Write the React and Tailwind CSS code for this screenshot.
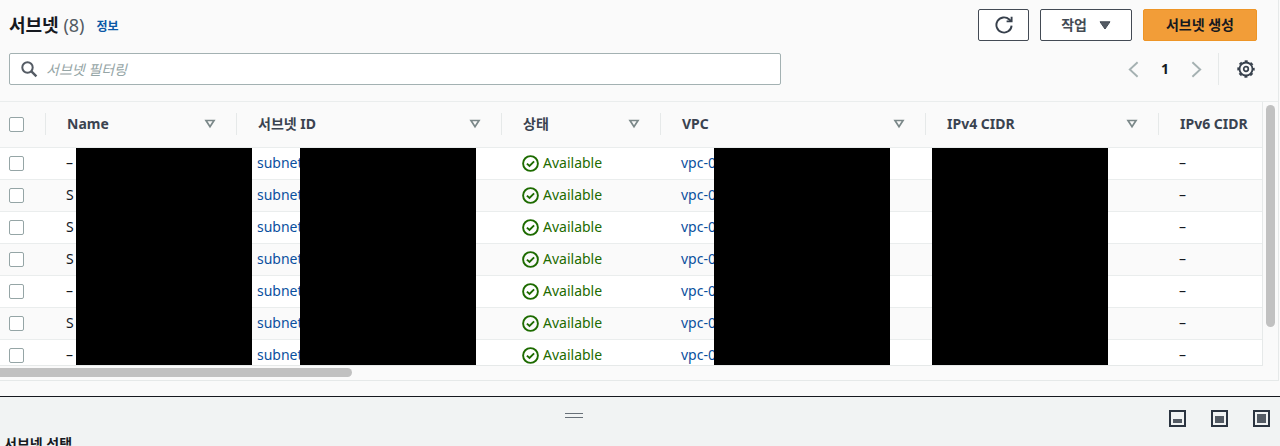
import { useState } from 'react';

const COLUMNS = [
  { label: 'Name', width: 'w-[191px]', sortable: true },
  { label: '서브넷 ID', width: 'w-[265px]', sortable: true },
  { label: '상태', width: 'w-[159px]', sortable: true },
  { label: 'VPC', width: 'w-[265px]', sortable: true },
  { label: 'IPv4 CIDR', width: 'w-[233px]', sortable: true },
  { label: 'IPv6 CIDR', width: '', sortable: false },
];

const SUBNETS = [
  { id: 1, name: '–' },
  { id: 2, name: 'S' },
  { id: 3, name: 'S' },
  { id: 4, name: 'S' },
  { id: 5, name: '–' },
  { id: 6, name: 'S' },
  { id: 7, name: '–' },
];

// hidden values: name, subnet id, vpc, ipv4
const MASKS = ['left-[76px]', 'left-[300px]', 'left-[714px]', 'left-[932px]'];

const Checkbox = ({ label }) => (
  <input
    type="checkbox"
    aria-label={label}
    className="block appearance-none w-[15px] h-[15px] ml-[9px] bg-white border border-[#95a5a6] rounded-[2px] checked:bg-[#0073bb]"
  />
);

const StatusIcon = () => (
  <svg width="17" height="17" viewBox="0 0 17 17" fill="none" stroke="#1d6b00" strokeWidth="1.9" className="shrink-0">
    <circle cx="8.5" cy="8.5" r="7.4" />
    <path d="M4.9 8.6l2.6 2.4 4.6-4.7" />
  </svg>
);

const SortIcon = () => (
  <svg width="12" height="10" viewBox="0 0 12 10" fill="none" stroke="#7b8889" strokeWidth="1.7" className="shrink-0">
    <path d="M2 1.5h8L6 7.7z" />
  </svg>
);

const SplitIcon = ({ y, height }) => (
  <svg width="17" height="17" viewBox="0 0 17 17" className="block">
    <rect x="1" y="1" width="15" height="15" fill="none" stroke="#2b3440" strokeWidth="2" />
    <rect x="4" y={y} width="9" height={height} fill="#545b64" />
  </svg>
);

const Toolbar = () => {
  const [filter, setFilter] = useState('');

  return (
    <div className="pt-[9px] pb-4 pl-[9px] pr-[21px] space-y-3">
      <div className="flex items-center justify-between h-8">
        <div className="flex items-center">
          <h1 className="text-lg font-bold text-[#16191f]">
            서브넷 <span className="font-normal text-[#545b64]">(8)</span>
          </h1>
          <a href="#info" className="ml-3 mt-1 text-xs font-bold text-[#0a58a6]">정보</a>
        </div>
        <div className="flex gap-[11px] h-8 text-sm font-bold">
          <button
            type="button"
            aria-label="새로 고침"
            className="flex items-center justify-center w-[51px] bg-white border border-[#434a54] rounded-[2px]"
          >
            <svg width="18" height="18" viewBox="0 0 18 18" fill="none" stroke="#37404c" strokeWidth="1.9">
              <path d="M16.6 9.6a7.6 7.6 0 1 1-2.3-6.1l1.7 1.6" />
              <path d="M16.6 .8v4.6h-5" />
            </svg>
          </button>
          <button
            type="button"
            className="flex items-center gap-3 px-5 bg-white border border-[#434a54] rounded-[2px] text-[#434a54]"
          >
            작업
            <svg width="12" height="9" viewBox="0 0 12 9" fill="#545b64" stroke="#434a54">
              <path d="M1 .8h10L6 8z" />
            </svg>
          </button>
          <button type="button" className="px-[22px] bg-[#f29d38] border border-[#ee9526] rounded-[2px] text-[#16191f]">
            서브넷 생성
          </button>
        </div>
      </div>

      <div className="flex items-center justify-between h-8">
        <div className="relative w-[calc(62%-2px)] h-8">
          <svg
            width="17" height="17" viewBox="0 0 17 17" fill="none" stroke="#545b64" strokeWidth="2"
            className="absolute left-3 top-2"
          >
            <circle cx="6.5" cy="6.5" r="5.2" />
            <path d="M10.4 10.4l5 5" strokeWidth="2.4" />
          </svg>
          <input
            type="text"
            aria-label="서브넷 필터링"
            placeholder="서브넷 필터링"
            value={filter}
            onChange={(e) => setFilter(e.target.value)}
            className="w-full h-8 pl-9 bg-white border border-[#a3b1b2] rounded-[2px] text-sm placeholder:italic placeholder:text-[#95a5a6]"
          />
        </div>
        <div className="flex items-center h-8">
          <button type="button" aria-label="이전 페이지">
            <svg width="11" height="17" viewBox="0 0 11 17" fill="none" stroke="#a5b1b2" strokeWidth="1.9">
              <path d="M9.6 1.3L1.8 8.5l7.8 7.2" />
            </svg>
          </button>
          <span className="w-[52px] text-center text-sm font-bold text-[#16191f]">1</span>
          <button type="button" aria-label="다음 페이지">
            <svg width="11" height="17" viewBox="0 0 11 17" fill="none" stroke="#a5b1b2" strokeWidth="1.9">
              <path d="M1.4 1.3l7.8 7.2-7.8 7.2" />
            </svg>
          </button>
          <span className="h-8 ml-4 mr-[18px] border-l border-[#e6e9e9]" />
          <button type="button" aria-label="기본 설정" className="mr-[2px]">
            <svg width="18" height="18" viewBox="0 0 18 18" fill="none" stroke="#37404c">
              <circle cx="9" cy="9" r="6.5" strokeWidth="1.8" />
              <circle cx="9" cy="9" r="7.8" strokeWidth="1.8" strokeDasharray="3.06 3.06" strokeDashoffset="1.53" />
              <circle cx="9" cy="9" r="2.3" strokeWidth="1.7" />
            </svg>
          </button>
        </div>
      </div>
    </div>
  );
};

const SubnetTable = () => (
  <div className="relative flex-1 min-w-0 max-h-[264px] overflow-hidden border-r border-b border-[#e6e9e9]">
    <table className="w-full table-fixed border-collapse text-sm">
      <thead>
        <tr className="h-[45px] border-b border-[#eaeded] text-left text-[#3a4350]">
          <th className="w-[45px] p-0"><Checkbox label="모두 선택" /></th>
          {COLUMNS.map((col) => (
            <th key={col.label} className={`${col.width} p-0 font-bold`}>
              <div className="flex items-center justify-between h-[22px] pl-[21px] pr-5 border-l border-[#e6e9e9] whitespace-nowrap">
                {col.label}
                {col.sortable && <SortIcon />}
              </div>
            </th>
          ))}
        </tr>
      </thead>
      <tbody>
        {SUBNETS.map((subnet) => (
          <tr key={subnet.id} className="h-8 border-b border-[#eaeded] odd:bg-white even:bg-[#fafafa] text-[#16191f]">
            <td className="p-0"><Checkbox label={`서브넷 ${subnet.id} 선택`} /></td>
            <td className="py-0 pl-[21px]">{subnet.name}</td>
            <td className="py-0 pl-[21px]"><a href="#subnet" className="text-[#0a4f9e]">subnet</a></td>
            <td className="py-0 pl-[21px]">
              <span className="flex items-center gap-1 text-[#1d6b00]">
                <StatusIcon />
                Available
              </span>
            </td>
            <td className="py-0 pl-[21px]"><a href="#vpc" className="text-[#0a4f9e]">vpc-0</a></td>
            <td className="p-0" />
            <td className="py-0 pl-[21px]">–</td>
          </tr>
        ))}
      </tbody>
    </table>
    {MASKS.map((left) => (
      <div key={left} className={`${left} absolute top-[46px] bottom-0 w-44 bg-black`} />
    ))}
  </div>
);

const DetailPanel = () => (
  <section className="flex-1 min-h-0 overflow-hidden bg-[#f1f3f3] border-t border-[#16191f]">
    <div className="grid grid-cols-[1fr_auto_1fr] pt-[13px] pr-[10px]">
      <span />
      <div className="w-[18px] h-[5px] mt-[3px] mr-[122px] border-y border-[#687078]" />
      <div className="flex justify-end gap-[25px]">
        <button type="button" aria-label="작게"><SplitIcon y={9} height={4} /></button>
        <button type="button" aria-label="중간"><SplitIcon y={6} height={7} /></button>
        <button type="button" aria-label="크게"><SplitIcon y={4} height={9} /></button>
      </div>
    </div>
    <h2 className="pl-1 pt-[7px] text-sm font-bold text-[#16191f]">서브넷 선택</h2>
  </section>
);

const App = () => {
  return (
    <div className="flex flex-col h-screen overflow-hidden bg-[#fafafa] font-['Noto_Sans','Noto_Sans_CJK_KR',sans-serif]">
      <main className="mr-px mb-[15px] border-r border-b border-[#e6e9e9]">
        <Toolbar />
        <div className="flex border-t border-[#eaeded]">
          <SubnetTable />
          <div className="w-[15px] px-[3px] pt-[3px]">
            <div className="h-[85%] rounded-full bg-[#c1c1c1]" />
          </div>
        </div>
        <div className="h-[14px] pt-[2px]">
          <div className="w-[352px] h-[9px] rounded-r-full bg-[#c1c1c1]" />
        </div>
      </main>
      <DetailPanel />
    </div>
  );
};

export default App;
